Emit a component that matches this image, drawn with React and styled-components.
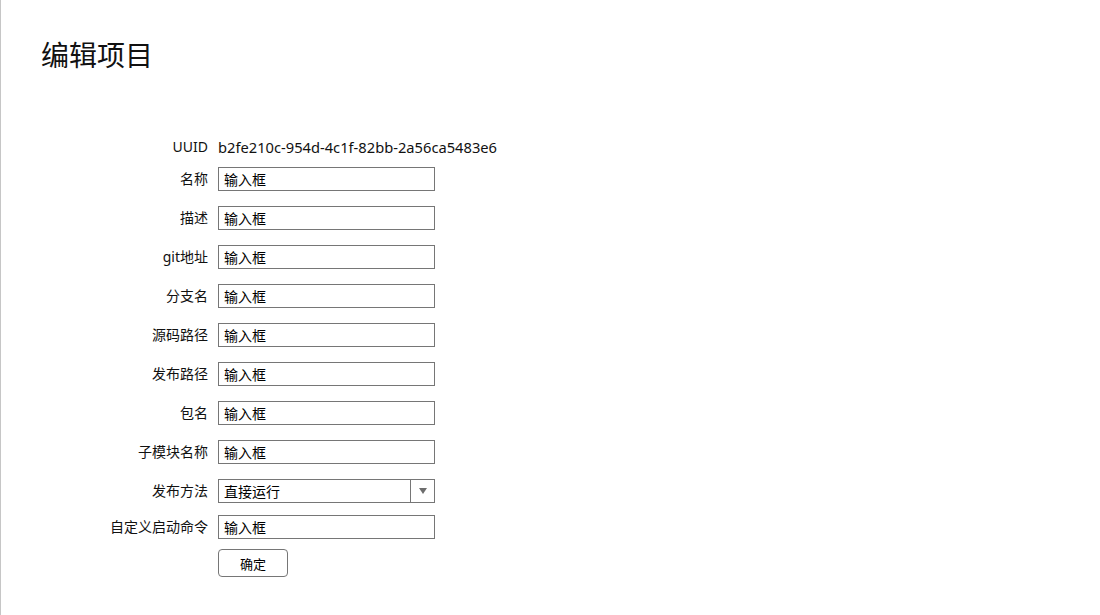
import React, {useState} from 'react';
import styled, {createGlobalStyle} from "styled-components"

const GlobalStyle = createGlobalStyle`
  html, body {
    margin: 0;
    padding: 0;
    background: #ffffff;
  }
  body {
    font-family: "Noto Sans", "Noto Sans CJK SC", sans-serif;
    color: #000;
  }
`

const fields = [
  {label: "名称"},
  {label: "描述"},
  {label: "git地址"},
  {label: "分支名"},
  {label: "源码路径"},
  {label: "发布路径"},
  {label: "包名"},
  {label: "子模块名称"},
]

function App() {
  const [method, setMethod] = useState("直接运行")

  return (
    <Page>
      <GlobalStyle />
      <Title>编辑项目</Title>
      <Form>
        <Row $mt={0}>
          <Label>UUID</Label>
          <Value>b2fe210c-954d-4c1f-82bb-2a56ca5483e6</Value>
        </Row>
        {fields.map((field, key) => (
          <Row key={key} $mt={key === 0 ? 10 : 15}>
            <Label>{field.label}</Label>
            <Input defaultValue="输入框" />
          </Row>
        ))}
        <Row $mt={15}>
          <Label>发布方法</Label>
          <SelectBox>
            <Select value={method} onChange={(e) => setMethod(e.target.value)}>
              <option>直接运行</option>
              <option>容器运行</option>
            </Select>
            <ArrowBox>
              <svg width="8" height="6" viewBox="0 0 8 6">
                <path d="M0 0 L8 0 L4 6 Z" fill="#6d6d6d" />
              </svg>
            </ArrowBox>
          </SelectBox>
        </Row>
        <Row $mt={12}>
          <Label>自定义启动命令</Label>
          <Input defaultValue="输入框" />
        </Row>
        <Row $mt={10}>
          <Label />
          <SubmitButton>确定</SubmitButton>
        </Row>
      </Form>
    </Page>
  );
}

export default App;

const fontStack = `"Noto Sans", "Noto Sans CJK SC", sans-serif`

const Page = styled.div`
  min-height: 100vh;
  box-sizing: border-box;
  border-left: 1px solid #c6c6c6;
  padding-top: 34px;
`

const Title = styled.h1`
  margin: 0 0 0 40px;
  font-family: "Noto Sans CJK SC", sans-serif;
  font-size: 28px;
  font-weight: 400;
  line-height: 40px;
  color: #111;
`

const Form = styled.div`
  display: flex;
  flex-direction: column;
  margin-top: 63px;
`

const Row = styled.div`
  display: flex;
  flex-direction: row;
  align-items: center;
  margin-top: ${(p) => p.$mt}px;
`

const Label = styled.div`
  width: 207px;
  margin-right: 10px;
  text-align: right;
  font-size: 14px;
  line-height: 20px;
  color: #111;
  white-space: nowrap;
`

const Value = styled.div`
  font-size: 14.7px;
  line-height: 20px;
  color: #111;
`

const Input = styled.input`
  box-sizing: border-box;
  width: 217px;
  height: 24px;
  border: 1px solid #767676;
  border-radius: 0;
  padding: 0 5px;
  font-family: ${fontStack};
  font-size: 14px;
  color: #000;
  outline: none;
`

const SelectBox = styled.div`
  box-sizing: border-box;
  display: flex;
  flex-direction: row;
  width: 217px;
  height: 24px;
  border: 1px solid #767676;
  background: #fff;
`

const Select = styled.select`
  flex: 1;
  appearance: none;
  -webkit-appearance: none;
  border: none;
  background: transparent;
  padding: 0 5px;
  font-family: ${fontStack};
  font-size: 14px;
  color: #000;
  outline: none;
`

const ArrowBox = styled.div`
  width: 23px;
  border-left: 1px solid #767676;
  display: flex;
  align-items: center;
  justify-content: center;
`

const SubmitButton = styled.button`
  box-sizing: border-box;
  width: 70px;
  height: 28px;
  border: 1px solid #767676;
  border-radius: 4px;
  background: #fff;
  font-family: ${fontStack};
  font-size: 13px;
  color: #000;
  padding: 0;
  &:hover {
    cursor: pointer;
    background: #f2f2f2;
  }
`
